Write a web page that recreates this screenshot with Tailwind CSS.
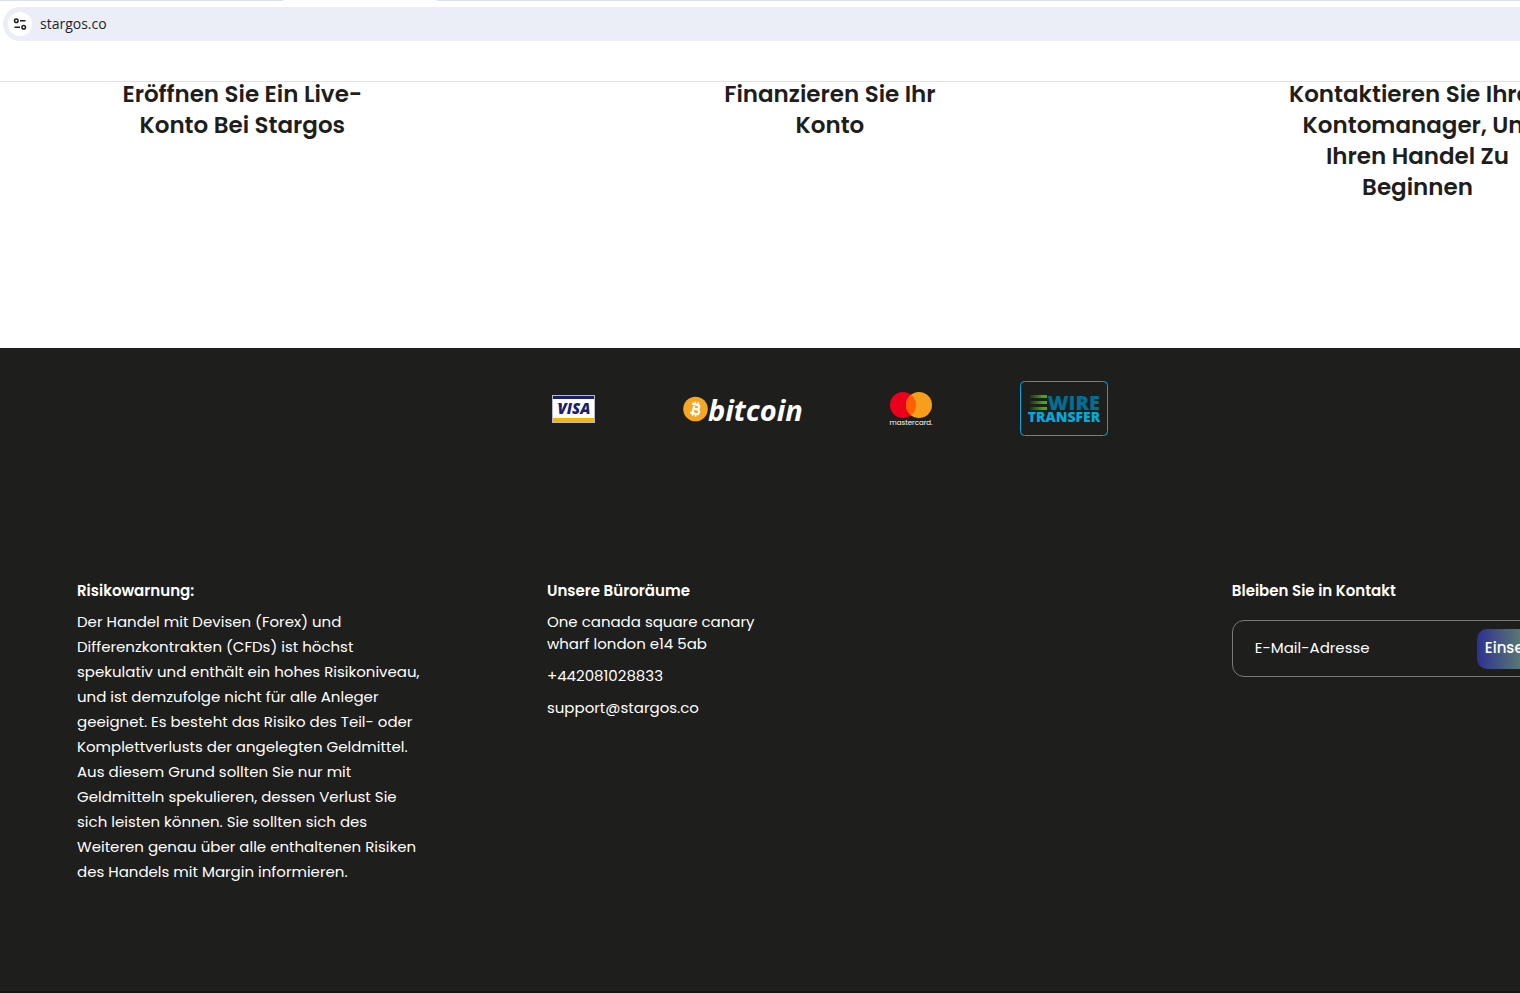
<!DOCTYPE html>
<html lang="de">
<head>
  <meta charset="UTF-8" />
  <meta name="viewport" content="width=device-width, initial-scale=1" />
  <title>Stargos</title>
  <script src="https://cdn.jsdelivr.net/npm/@tailwindcss/browser@4"></script>
</head>
<body class="min-h-screen flex flex-col overflow-x-hidden bg-white text-[#1e1e1c] font-['Poppins','Inter',sans-serif]">

  <!-- Browser toolbar -->
  <header class="shrink-0 border-b border-[#dfe1e5] overflow-hidden">
    <div class="flex h-px">
      <div class="w-[283px] bg-[#dde1ec]"></div>
      <div class="w-[154px]"></div>
      <div class="flex-1 bg-[#dde1ec]"></div>
    </div>
    <div class="mt-1.5 mb-10 ml-[3px] h-[34px] flex items-center gap-2 pl-[5px] rounded-l-full bg-[#ebeef7]">
      <button type="button" aria-label="Website-Informationen" class="size-6 rounded-full bg-white flex items-center justify-center">
        <svg class="size-4" viewBox="0 0 16 16" fill="none" stroke="#1f1f1f" stroke-width="1.5">
          <circle cx="4.3" cy="4.7" r="1.8" />
          <path d="M8 4.7h5.5M2.5 11.3H8" />
          <circle cx="11.7" cy="11.3" r="1.8" />
        </svg>
      </button>
      <input type="text" aria-label="Adresse" value="stargos.co" class="flex-1 outline-none text-sm text-[#1f1f1f] font-['Open_Sans',sans-serif]" />
    </div>
  </header>

  <!-- Steps -->
  <main class="w-[109.2%] pb-[145px]">
    <div class="-mt-[3px] flex justify-between text-center text-[23px] leading-[31px] font-semibold">
      <h2 class="w-[29.2%]">Eröffnen Sie Ein Live-<br />Konto Bei Stargos</h2>
      <h2 class="w-[29.2%]">Finanzieren Sie Ihr<br />Konto</h2>
      <h2 class="w-[29.2%]">Kontaktieren Sie Ihren<br />Kontomanager, Um<br />Ihren Handel Zu<br />Beginnen</h2>
    </div>
  </main>

  <footer class="flex-1 bg-[#1e1e1c] text-white border-b-2 border-[#171312]">
    <div class="w-[109.2%] px-[77px] pt-[33px] pb-16">

      <!-- Payment methods -->
      <div class="flex justify-center items-center gap-[88px]">
        <svg class="w-[43px] h-7" viewBox="0 0 43 28" role="img" aria-label="Visa">
          <rect width="43" height="28" fill="#b9bac4" />
          <rect x="1" y="1" width="41" height="26" fill="#fff" />
          <rect x="1" y="1" width="41" height="3" fill="#1a1f71" />
          <rect x="1" y="23" width="41" height="4" fill="#f7b600" />
          <path d="M5 8.4h4.5l.8 4.6C9.4 10.6 7.6 9.2 5 8.4z" fill="#1a1f71" />
          <text x="22" y="19" text-anchor="middle" font-family="Open Sans, sans-serif" font-size="15" font-weight="800" font-style="italic" fill="#1a1f71">VISA</text>
        </svg>

        <svg class="w-[119px] h-[26px]" viewBox="0 0 119 26" overflow="visible" role="img" aria-label="Bitcoin">
          <circle cx="12.5" cy="13" r="12.3" fill="#f5a623" />
          <g transform="rotate(12 12.5 13)" fill="none" stroke="#fff" stroke-width="2.2">
            <path d="M8 8.5h5.5a2.2 2.2 0 0 1 0 4.5H10.5M13.5 13h.8a2.3 2.3 0 0 1 0 4.7H8M10.5 8.5v9.2" />
            <path d="M11 5.8v2.5M14 5.8v2.5M11 18v2.5M14 18v2.5" stroke-width="1.5" />
          </g>
          <text x="25" y="25" font-family="Open Sans, sans-serif" font-size="29" font-weight="700" font-style="italic" fill="#fff">bitcoin</text>
        </svg>

        <svg class="w-[42px] h-[34px]" viewBox="0 0 42 34" overflow="visible" role="img" aria-label="Mastercard">
          <circle cx="13" cy="13" r="13" fill="#eb001b" />
          <circle cx="29" cy="13" r="13" fill="#f79e1b" />
          <path d="M21 2.75a13 13 0 0 1 0 20.5a13 13 0 0 1 0-20.5z" fill="#ff5f00" />
          <text x="21" y="33" text-anchor="middle" font-family="Poppins, sans-serif" font-size="7" fill="#fff">mastercard.</text>
        </svg>

        <svg class="w-[88px] h-[55px]" viewBox="0 0 88 55" role="img" aria-label="Wire Transfer">
          <defs>
            <linearGradient id="speed" gradientUnits="userSpaceOnUse" x1="8" y1="0" x2="27" y2="0">
              <stop offset="0" stop-color="#3fae0a" stop-opacity="0" />
              <stop offset="0.8" stop-color="#3fae0a" />
            </linearGradient>
          </defs>
          <rect x="0.5" y="0.5" width="87" height="54" rx="4" fill="none" stroke="#00aadd" />
          <path d="M10 14h17v3H10zM10 20h17v3H10zM10 26h17v3H10z" fill="url(#speed)" />
          <text x="80" y="29" text-anchor="end" font-family="Open Sans, sans-serif" font-size="20" font-weight="800" fill="#006f94">WIRE</text>
          <text x="44" y="41" text-anchor="middle" font-family="Open Sans, sans-serif" font-size="14" font-weight="800" fill="#00aadd">TRANSFER</text>
        </svg>
      </div>

      <div class="mt-[143px] grid grid-cols-[470fr_685fr_351fr] text-[15px]">
        <section>
          <h3 class="leading-6 font-semibold">Risikowarnung:</h3>
          <p class="mt-1.5 leading-[25px]">
            Der Handel mit Devisen (Forex) und<br />
            Differenzkontrakten (CFDs) ist höchst<br />
            spekulativ und enthält ein hohes Risikoniveau,<br />
            und ist demzufolge nicht für alle Anleger<br />
            geeignet. Es besteht das Risiko des Teil- oder<br />
            Komplettverlusts der angelegten Geldmittel.<br />
            Aus diesem Grund sollten Sie nur mit<br />
            Geldmitteln spekulieren, dessen Verlust Sie<br />
            sich leisten können. Sie sollten sich des<br />
            Weiteren genau über alle enthaltenen Risiken<br />
            des Handels mit Margin informieren.
          </p>
        </section>

        <section>
          <h3 class="leading-6 font-semibold">Unsere Büroräume</h3>
          <address class="mt-2 flex flex-col items-start gap-2.5 leading-[22px] not-italic">
            <p>One canada square canary<br />wharf london e14 5ab</p>
            <a href="tel:+442081028833">+442081028833</a>
            <a href="mailto:support@stargos.co">support@stargos.co</a>
          </address>
        </section>

        <section class="min-w-0">
          <h3 class="leading-6 font-semibold"><label for="email">Bleiben Sie in Kontakt</label></h3>
          <form class="mt-[17px] h-[57px] flex items-center pl-[22px] pr-2 rounded-xl border border-[#7a7a79]">
            <input id="email" type="email" placeholder="E-Mail-Adresse" class="flex-1 min-w-0 outline-none placeholder:text-white" />
            <button type="submit" class="w-[97px] h-10 pl-2 text-left rounded-[10px] bg-linear-to-r/srgb from-[#2e3192] to-[#8fd04a] font-medium">Einsenden</button>
          </form>
        </section>
      </div>
    </div>
  </footer>

</body>
</html>
